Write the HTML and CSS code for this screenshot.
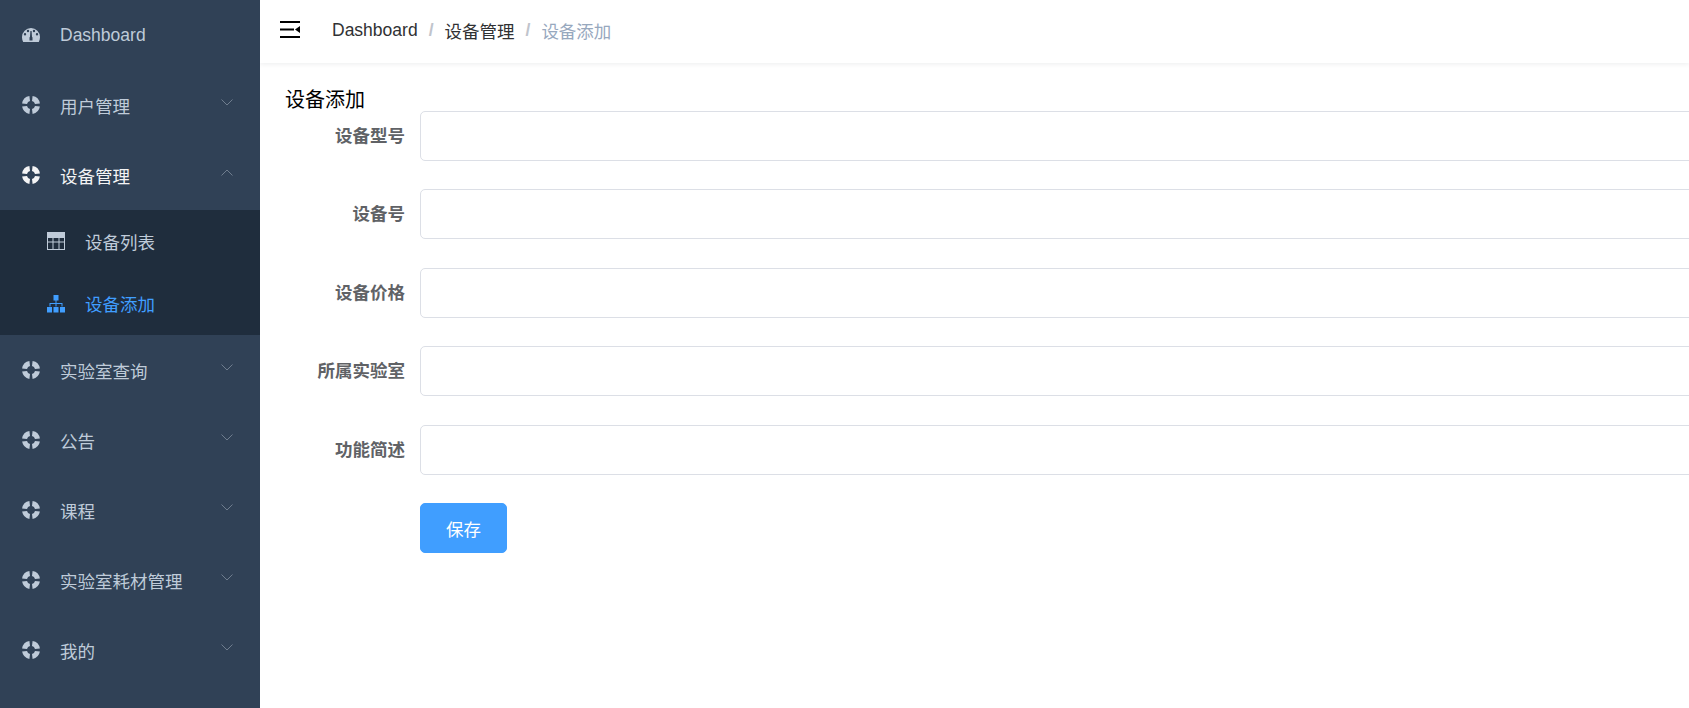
FILE: index.html
```html
<!DOCTYPE html>
<html lang="zh">
<head>
<meta charset="utf-8">
<title>设备添加</title>
<link rel="stylesheet" href="styles.css">
</head>
<body>
<svg class="defs" width="0" height="0" aria-hidden="true">
  <symbol id="ring" viewBox="0 0 18 18">
    <path fill="currentColor" fill-rule="evenodd" d="M7.4.1A9 9 0 0 0 .1 7.4L5 8A4 4 0 0 1 8 5ZM10.600.1 10 5A4 4 0 0 1 13 8L17.900 7.400A9 9 0 0 0 10.600.1ZM.1 10.600A9 9 0 0 0 7.400 17.900L8 13A4 4 0 0 1 5 10ZM17.900 10.600 13 10A4 4 0 0 1 10 13L10.600 17.900A9 9 0 0 0 17.900 10.600Z"/>
  </symbol>
  <symbol id="down" viewBox="0 0 12 7">
    <path fill="none" stroke="currentColor" stroke-width="1" d="M.5.5 6 6 11.500.5"/>
  </symbol>
  <symbol id="up" viewBox="0 0 12 7">
    <path fill="none" stroke="currentColor" stroke-width="1" d="M.5 6.500 6 1l5.500 5.500"/>
  </symbol>
</svg>
<aside class="sidebar">
  <a class="item">
    <svg class="icon" viewBox="0 0 18 14"><path fill="currentColor" fill-rule="evenodd" d="M9 0a9 9 0 0 1 9 9c0 1.800-.4 3.500-1.200 5H1.200A10 10 0 0 1 0 9a9 9 0 0 1 9-9ZM6 1.800a1.200 1.200 0 1 0 0 2.400 1.200 1.200 0 0 0 0-2.400Zm6 0a1.200 1.200 0 1 0 0 2.400 1.200 1.200 0 0 0 0-2.400ZM3 5a1.200 1.200 0 1 0 0 2.400A1.200 1.200 0 0 0 3 5Zm12 0a1.200 1.200 0 1 0 0 2.400A1.200 1.200 0 0 0 15 5ZM8.400 3 8 8.700a1.500 1.500 0 0 0-.5 1.100V12.500h3V9.800a1.500 1.500 0 0 0-.5-1.100L9.600 3Z"/></svg>
    <span class="label">Dashboard</span>
  </a>
  <a class="item">
    <svg class="icon ring"><use href="#ring"/></svg>
    <span class="label">用户管理</span>
    <svg class="chev"><use href="#down"/></svg>
  </a>
  <a class="item open">
    <svg class="icon ring"><use href="#ring"/></svg>
    <span class="label">设备管理</span>
    <svg class="chev"><use href="#up"/></svg>
  </a>
  <div class="submenu">
    <a class="subitem">
      <svg class="icon" viewBox="0 0 18 18"><path fill="currentColor" fill-rule="evenodd" d="M0 0h18v18H0ZM1 6v3.500h4.500V6Zm5.500 0v3.500h5V6Zm6 0v3.500H17V6ZM1 10.500V17h4.500v-6.500Zm5.500 0V17h5v-6.500Zm6 0V17H17v-6.500Z"/></svg>
      <span class="label">设备列表</span>
    </a>
    <a class="subitem active">
      <svg class="icon" viewBox="0 0 18 18"><path fill="currentColor" d="M6.500 0h5v5.500h-5ZM8.500 5.500h1V8H15.500v3.500h-1V9h-5v2.500h-1V9h-5v2.500h-1V8h6ZM0 12h5v5.500H0ZM6.500 12h5v5.500h-5ZM13 12h5v5.500h-5Z"/></svg>
      <span class="label">设备添加</span>
    </a>
  </div>
  <a class="item">
    <svg class="icon ring"><use href="#ring"/></svg>
    <span class="label">实验室查询</span>
    <svg class="chev"><use href="#down"/></svg>
  </a>
  <a class="item">
    <svg class="icon ring"><use href="#ring"/></svg>
    <span class="label">公告</span>
    <svg class="chev"><use href="#down"/></svg>
  </a>
  <a class="item">
    <svg class="icon ring"><use href="#ring"/></svg>
    <span class="label">课程</span>
    <svg class="chev"><use href="#down"/></svg>
  </a>
  <a class="item">
    <svg class="icon ring"><use href="#ring"/></svg>
    <span class="label">实验室耗材管理</span>
    <svg class="chev"><use href="#down"/></svg>
  </a>
  <a class="item">
    <svg class="icon ring"><use href="#ring"/></svg>
    <span class="label">我的</span>
    <svg class="chev"><use href="#down"/></svg>
  </a>
</aside>
<div class="main">
  <header class="navbar">
    <svg class="hamburger" viewBox="0 0 20 17"><path fill="#000" d="M0 0h20v2H0ZM0 7.500h14v2H0ZM0 15h20v2H0ZM20 5v7l-5-3.500Z"/></svg>
    <nav class="crumbs">
      <span class="crumb">Dashboard</span><span class="sep">/</span>
      <span class="crumb">设备管理</span><span class="sep">/</span>
      <span class="crumb last">设备添加</span>
    </nav>
  </header>
  <section class="content">
    <div class="title">设备添加</div>
    <form class="form">
      <div class="row"><label class="row-label">设备型号</label><input class="field" type="text"></div>
      <div class="row"><label class="row-label">设备号</label><input class="field" type="text"></div>
      <div class="row"><label class="row-label">设备价格</label><input class="field" type="text"></div>
      <div class="row"><label class="row-label">所属实验室</label><input class="field" type="text"></div>
      <div class="row"><label class="row-label">功能简述</label><input class="field" type="text"></div>
      <div class="row"><span class="row-label"></span><button class="save" type="button">保存</button></div>
    </form>
  </section>
</div>
</body>
</html>
```

FILE: styles.css
```css
* { box-sizing: border-box; }
html, body { margin: 0; height: 100%; overflow: hidden; }
body {
  display: flex;
  background: #fff;
  font-family: "Liberation Sans", "Noto Sans CJK SC", sans-serif;
  font-size: 17.5px;
  color: #303133;
}
.defs { position: absolute; }

.sidebar { width: 260px; flex: none; height: 708px; background: #304156; color: #bfcbd9; }
.item {
  height: 70px;
  display: flex;
  align-items: center;
  padding-left: 22px;
  padding-right: 27px;
}
.item.open { color: #f4f4f5; }
.icon { width: 18px; height: 18px; flex: none; margin-right: 20px; }
.label { flex: 1; white-space: nowrap; }
.chev { width: 12px; height: 7px; flex: none; color: #6f7d8e; margin-top: -5px; }
.submenu { background: #1f2d3d; }
.subitem {
  height: 62.5px;
  display: flex;
  align-items: center;
  padding-left: 47px;
}
.subitem .icon { margin-right: 20px; }
.subitem.active { color: #409eff; }

.main { flex: 1; min-width: 0; overflow: hidden; }
.navbar {
  height: 62.5px;
  display: flex;
  align-items: center;
  padding-left: 20px;
  box-shadow: 0 1px 5px rgba(0, 21, 41, .08);
}
.hamburger { width: 20px; height: 17px; flex: none; margin-right: 32px; margin-top: -4px; }
.crumbs { display: flex; align-items: center; white-space: nowrap; margin-top: -1px; }
.sep { color: #c0c4cc; margin: 0 11px; font-weight: 700; }
.crumb.last { color: #97a8be; }

.content { padding: 25px 0 0 25px; }
.title { font-size: 20px; line-height: 24px; color: #000; margin-bottom: -1px; }
.form { margin-left: -15px; width: 1500px; }
.row { display: flex; margin-bottom: 28.500px; }
.row-label {
  width: 150px;
  flex: none;
  padding-right: 15px;
  text-align: right;
  line-height: 50px;
  font-weight: 700;
  color: #606266;
}
.field {
  flex: 1;
  height: 50px;
  border: 1px solid #dcdfe6;
  border-radius: 5px;
  background: #fff;
  outline: none;
}
.save {
  width: 87px;
  height: 50px;
  border: 1px solid #409eff;
  border-radius: 5px;
  background: #409eff;
  color: #fff;
  font: inherit;
}
```
